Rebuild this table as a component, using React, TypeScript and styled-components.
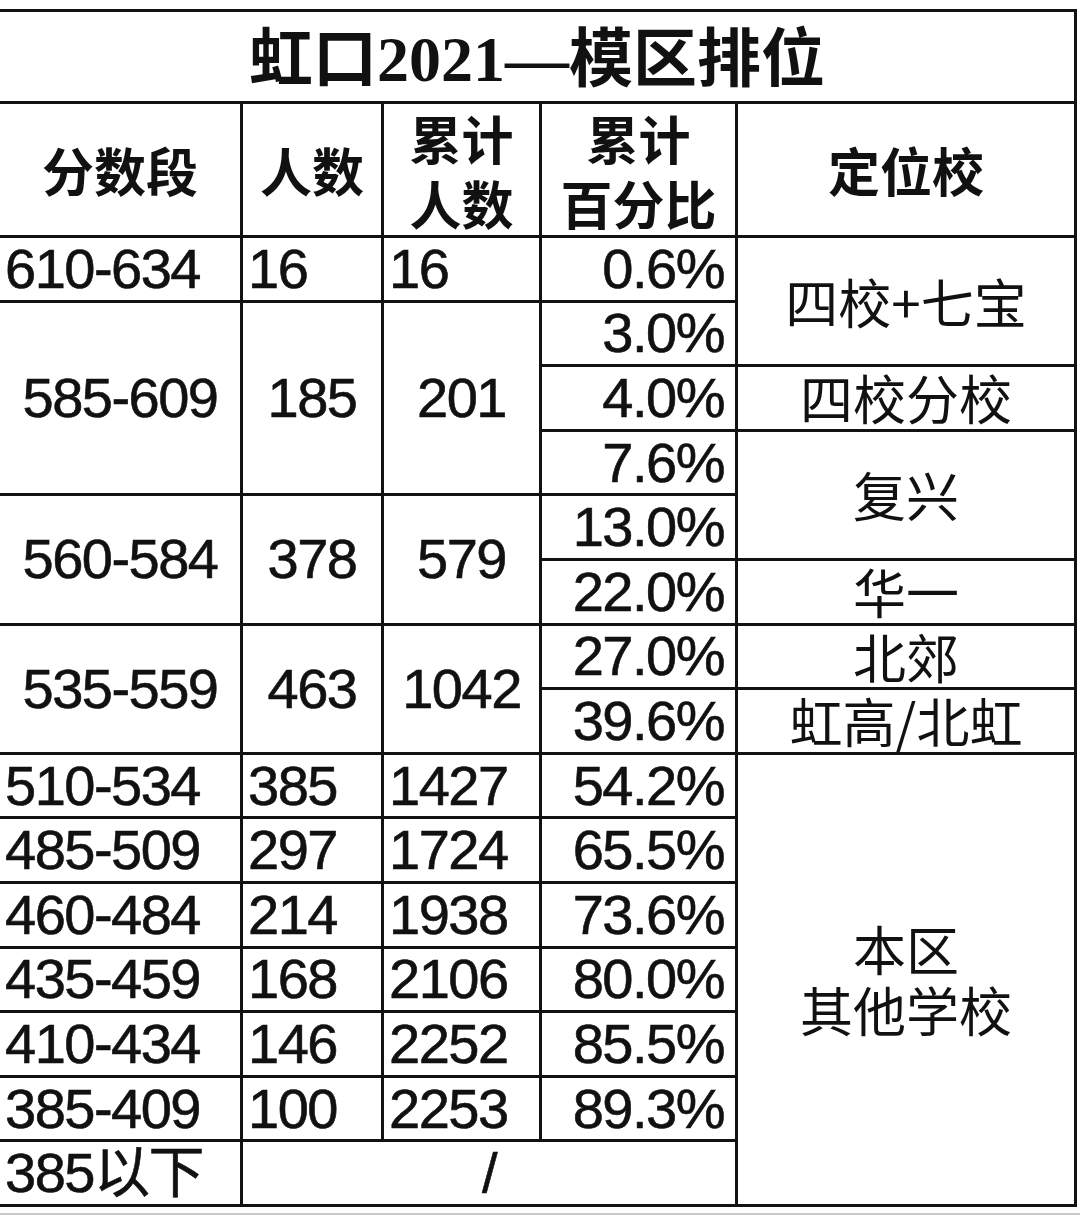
import React from "react";
import styled, { createGlobalStyle } from "styled-components";

const Global = createGlobalStyle`
  html, body { margin: 0; padding: 0; background: #ffffff; }
  body { overflow: hidden; }
`;

const Page = styled.div`
  width: 1080px;
  height: 1217px;
  padding-top: 9px;
  box-sizing: border-box;
  background: #fff;
  overflow: hidden;
`;

const Table = styled.div`
  display: grid;
  width: 1080px;
  margin-left: -3px;
  box-sizing: border-box;
  padding: 3px;
  gap: 3px;
  background: #121212;
  grid-template-columns: 240px 138px 155px 193px 336px;
  grid-template-rows: 89px 131px repeat(15, 61.6px);
`;

const Under = styled.div`
  width: 1080px;
  height: 0;
  margin-top: 6px;
  border-top: 2px solid #c9c9c9;
`;

type Align = "left" | "center" | "right";
type Kind = "num" | "head" | "school" | "title";

const Cell = styled.div<{
  $col: number;
  $row: number;
  $colSpan?: number;
  $rowSpan?: number;
  $align: Align;
  $kind: Kind;
}>`
  grid-column: ${(p) => p.$col} / span ${(p) => p.$colSpan ?? 1};
  grid-row: ${(p) => p.$row} / span ${(p) => p.$rowSpan ?? 1};
  background: #fff;
  color: #111;
  display: flex;
  flex-direction: column;
  justify-content: center;
  align-items: ${(p) =>
    p.$align === "left" ? "flex-start" : p.$align === "right" ? "flex-end" : "center"};
  text-align: ${(p) => p.$align};
  padding: ${(p) =>
    p.$align === "left" ? "0 0 0 5px" : p.$align === "right" ? "0 11px 0 0" : "0"};
  box-sizing: border-box;
  white-space: nowrap;
  min-width: 0;
  ${(p) =>
    p.$kind === "num" &&
    `
    font-family: "Liberation Sans", "Noto Sans CJK SC", sans-serif;
    font-size: 56px;
    letter-spacing: -1.5px;
    line-height: 1;
    font-weight: 400;
    -webkit-text-stroke: 0.6px #111;
  `}
  ${(p) =>
    p.$kind === "head" &&
    `
    font-family: "Noto Sans CJK SC", sans-serif;
    font-size: 52px;
    line-height: 65px;
    font-weight: 700;
  `}
  ${(p) =>
    p.$kind === "school" &&
    `
    font-family: "Noto Sans CJK SC", sans-serif;
    font-size: 53px;
    line-height: 61px;
    font-weight: 400;
  `}
  ${(p) =>
    p.$kind === "title" &&
    `
    font-family: "Liberation Serif", "Noto Sans CJK SC", serif;
    font-size: 64px;
    line-height: 1;
    font-weight: 700;
    padding-top: 6px;
  `}
`;

type Entry = { text: string; span: number; align: Align };

const col1: Entry[] = [
  { text: "610-634", span: 1, align: "left" },
  { text: "585-609", span: 3, align: "center" },
  { text: "560-584", span: 2, align: "center" },
  { text: "535-559", span: 2, align: "center" },
  { text: "510-534", span: 1, align: "left" },
  { text: "485-509", span: 1, align: "left" },
  { text: "460-484", span: 1, align: "left" },
  { text: "435-459", span: 1, align: "left" },
  { text: "410-434", span: 1, align: "left" },
  { text: "385-409", span: 1, align: "left" },
  { text: "385以下", span: 1, align: "left" },
];

const col2: Entry[] = [
  { text: "16", span: 1, align: "left" },
  { text: "185", span: 3, align: "center" },
  { text: "378", span: 2, align: "center" },
  { text: "463", span: 2, align: "center" },
  { text: "385", span: 1, align: "left" },
  { text: "297", span: 1, align: "left" },
  { text: "214", span: 1, align: "left" },
  { text: "168", span: 1, align: "left" },
  { text: "146", span: 1, align: "left" },
  { text: "100", span: 1, align: "left" },
];

const col3: Entry[] = [
  { text: "16", span: 1, align: "left" },
  { text: "201", span: 3, align: "center" },
  { text: "579", span: 2, align: "center" },
  { text: "1042", span: 2, align: "center" },
  { text: "1427", span: 1, align: "left" },
  { text: "1724", span: 1, align: "left" },
  { text: "1938", span: 1, align: "left" },
  { text: "2106", span: 1, align: "left" },
  { text: "2252", span: 1, align: "left" },
  { text: "2253", span: 1, align: "left" },
];

const col4: Entry[] = [
  "0.6%", "3.0%", "4.0%", "7.6%", "13.0%", "22.0%", "27.0%", "39.6%",
  "54.2%", "65.5%", "73.6%", "80.0%", "85.5%", "89.3%",
].map((t) => ({ text: t, span: 1, align: "right" as Align }));

const col5: { lines: string[]; span: number }[] = [
  { lines: ["四校+七宝"], span: 2 },
  { lines: ["四校分校"], span: 1 },
  { lines: ["复兴"], span: 2 },
  { lines: ["华一"], span: 1 },
  { lines: ["北郊"], span: 1 },
  { lines: ["虹高/北虹"], span: 1 },
  { lines: ["本区", "其他学校"], span: 7 },
];

const headers: { lines: string[]; col: number }[] = [
  { lines: ["分数段"], col: 1 },
  { lines: ["人数"], col: 2 },
  { lines: ["累计", "人数"], col: 3 },
  { lines: ["累计", "百分比"], col: 4 },
  { lines: ["定位校"], col: 5 },
];

const Line = styled.span`
  display: block;
`;

function renderColumn(entries: Entry[], col: number) {
  let row = 3;
  return entries.map((e, i) => {
    const r = row;
    row += e.span;
    return (
      <Cell
        key={`c${col}-${i}`}
        $col={col}
        $row={r}
        $rowSpan={e.span}
        $align={e.align}
        $kind="num"
      >
        {e.text}
      </Cell>
    );
  });
}

export default function App() {
  let r5 = 3;
  return (
    <>
      <Global />
      <Page>
        <Table>
          <Cell $col={1} $row={1} $colSpan={5} $align="center" $kind="title">
            虹口2021—模区排位
          </Cell>
          {headers.map((h) => (
            <Cell key={`h${h.col}`} $col={h.col} $row={2} $align="center" $kind="head">
              {h.lines.map((l) => (
                <Line key={l}>{l}</Line>
              ))}
            </Cell>
          ))}
          {renderColumn(col1, 1)}
          {renderColumn(col2, 2)}
          {renderColumn(col3, 3)}
          {renderColumn(col4, 4)}
          <Cell $col={2} $row={17} $colSpan={3} $align="center" $kind="num">
            /
          </Cell>
          {col5.map((s, i) => {
            const r = r5;
            r5 += s.span;
            return (
              <Cell
                key={`s${i}`}
                $col={5}
                $row={r}
                $rowSpan={s.span}
                $align="center"
                $kind="school"
              >
                {s.lines.map((l) => (
                  <Line key={l}>{l}</Line>
                ))}
              </Cell>
            );
          })}
        </Table>
        <Under />
      </Page>
    </>
  );
}
